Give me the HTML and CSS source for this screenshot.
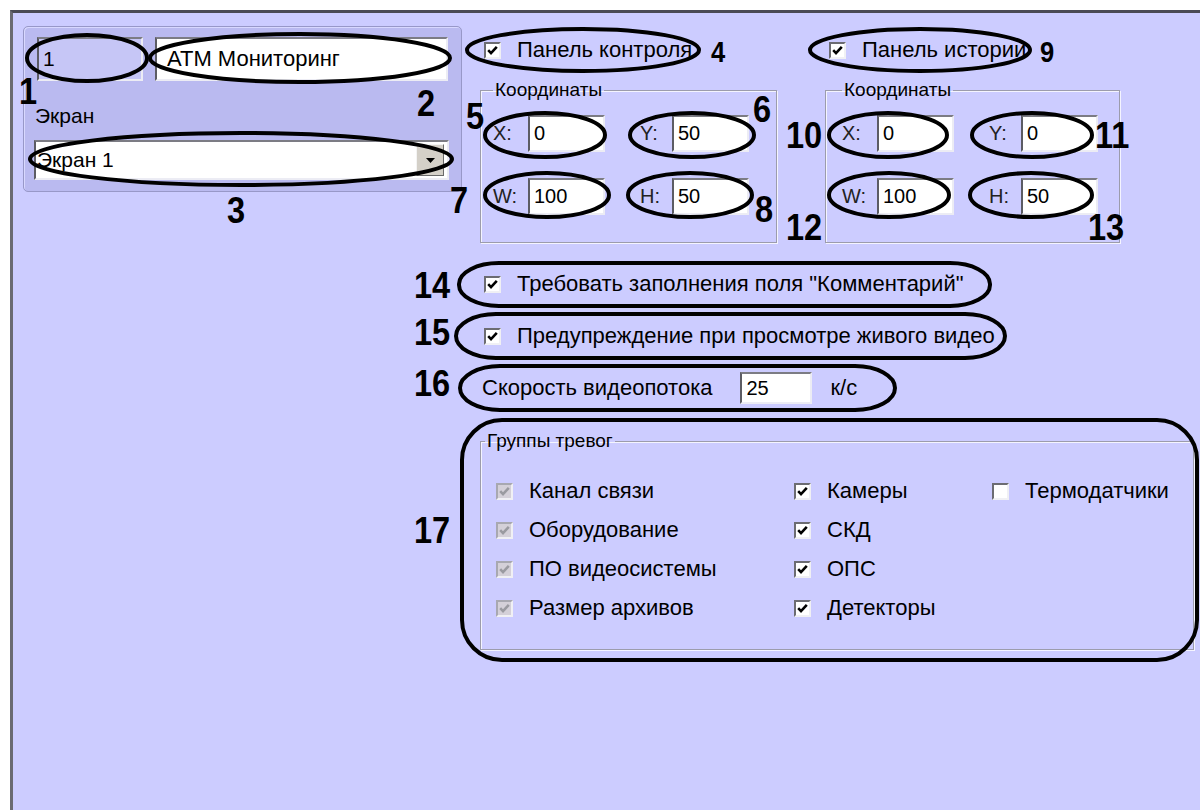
FILE: index.html
```html
<!DOCTYPE html>
<html lang="ru">
<head>
    <meta charset="UTF-8">
    <title>Настройка АТМ Мониторинг</title>
    <link rel="stylesheet" href="styles.css">
</head>
<body>

<div class="window">
    <div class="layout">
        <!-- left: screen settings -->
        <div class="left-col">
            <div class="screen-panel">
                <div class="id-row">
                    <span class="field field-id">1</span>
                    <span class="field field-name">АТМ Мониторинг</span>
                </div>
                <div class="screen-label">Экран</div>
                <div class="combo">
                    <span class="combo-text">Экран 1</span>
                    <span class="combo-btn">
                        <svg width="9" height="5" viewBox="0 0 9 5"><path d="M0 0h9L4.5 5z" fill="#000"/></svg>
                    </span>
                </div>
            </div>
        </div>

        <!-- right: panels and options -->
        <div class="right-col">
            <div class="panels">
                <div class="panel">
                    <div class="check panel-check">
                        <span class="box"><svg viewBox="0 0 13 13"><path d="M2.2 6.2l2.8 2.9 5.8-6.2"/></svg></span>
                        Панель контроля
                    </div>
                    <fieldset class="group coords">
                        <legend>Координаты</legend>
                        <div class="coord-row">
                            <span class="coord-label">X:</span><span class="field coord-input">0</span>
                            <span class="coord-label second">Y:</span><span class="field coord-input">50</span>
                        </div>
                        <div class="coord-row">
                            <span class="coord-label">W:</span><span class="field coord-input">100</span>
                            <span class="coord-label second">H:</span><span class="field coord-input">50</span>
                        </div>
                    </fieldset>
                </div>
                <div class="panel">
                    <div class="check panel-check">
                        <span class="box"><svg viewBox="0 0 13 13"><path d="M2.2 6.2l2.8 2.9 5.8-6.2"/></svg></span>
                        Панель истории
                    </div>
                    <fieldset class="group coords coords-history">
                        <legend>Координаты</legend>
                        <div class="coord-row">
                            <span class="coord-label">X:</span><span class="field coord-input">0</span>
                            <span class="coord-label second">Y:</span><span class="field coord-input">0</span>
                        </div>
                        <div class="coord-row">
                            <span class="coord-label">W:</span><span class="field coord-input">100</span>
                            <span class="coord-label second">H:</span><span class="field coord-input">50</span>
                        </div>
                    </fieldset>
                </div>
            </div>

            <div class="check option-row">
                <span class="box"><svg viewBox="0 0 13 13"><path d="M2.2 6.2l2.8 2.9 5.8-6.2"/></svg></span>
                Требовать заполнения поля "Комментарий"
            </div>
            <div class="check option-row">
                <span class="box"><svg viewBox="0 0 13 13"><path d="M2.2 6.2l2.8 2.9 5.8-6.2"/></svg></span>
                Предупреждение при просмотре живого видео
            </div>
            <div class="speed-row">
                <span>Скорость видеопотока</span>
                <span class="field speed-input">25</span>
                <span class="speed-unit">к/с</span>
            </div>

            <fieldset class="group alarms">
                <legend>Группы тревог</legend>
                <div class="alarm-grid">
                    <div class="check"><span class="box disabled"><svg viewBox="0 0 13 13"><path d="M2.2 6.2l2.8 2.9 5.8-6.2"/></svg></span>Канал связи</div>
                    <div class="check"><span class="box"><svg viewBox="0 0 13 13"><path d="M2.2 6.2l2.8 2.9 5.8-6.2"/></svg></span>Камеры</div>
                    <div class="check"><span class="box"></span>Термодатчики</div>

                    <div class="check"><span class="box disabled"><svg viewBox="0 0 13 13"><path d="M2.2 6.2l2.8 2.9 5.8-6.2"/></svg></span>Оборудование</div>
                    <div class="check"><span class="box"><svg viewBox="0 0 13 13"><path d="M2.2 6.2l2.8 2.9 5.8-6.2"/></svg></span>СКД</div>
                    <div></div>

                    <div class="check"><span class="box disabled"><svg viewBox="0 0 13 13"><path d="M2.2 6.2l2.8 2.9 5.8-6.2"/></svg></span>ПО видеосистемы</div>
                    <div class="check"><span class="box"><svg viewBox="0 0 13 13"><path d="M2.2 6.2l2.8 2.9 5.8-6.2"/></svg></span>ОПС</div>
                    <div></div>

                    <div class="check"><span class="box disabled"><svg viewBox="0 0 13 13"><path d="M2.2 6.2l2.8 2.9 5.8-6.2"/></svg></span>Размер архивов</div>
                    <div class="check"><span class="box"><svg viewBox="0 0 13 13"><path d="M2.2 6.2l2.8 2.9 5.8-6.2"/></svg></span>Детекторы</div>
                    <div></div>
                </div>
            </fieldset>
        </div>
    </div>
</div>

<!-- numbered callouts drawn over the dialog -->
<svg class="callouts" width="1200" height="810" viewBox="0 0 1200 810">
    <g class="rings">
        <ellipse cx="87" cy="58" rx="60" ry="23"/>
        <ellipse cx="300" cy="58" rx="150" ry="24"/>
        <ellipse cx="241" cy="159" rx="211" ry="26"/>
        <ellipse cx="583" cy="50" rx="116" ry="21"/>
        <ellipse cx="920" cy="50" rx="110" ry="21"/>
        <ellipse cx="545" cy="135" rx="60" ry="22"/>
        <ellipse cx="692" cy="135" rx="62" ry="22"/>
        <ellipse cx="547" cy="195" rx="62" ry="22"/>
        <ellipse cx="690" cy="195" rx="62" ry="22"/>
        <ellipse cx="888" cy="135" rx="59" ry="22"/>
        <ellipse cx="1032" cy="135" rx="60" ry="22"/>
        <ellipse cx="889" cy="195" rx="60" ry="22"/>
        <ellipse cx="1031" cy="195" rx="61" ry="22"/>
        <rect x="459" y="263" width="531" height="43" rx="40" ry="21"/>
        <rect x="456" y="314" width="549" height="44" rx="40" ry="22"/>
        <rect x="460" y="366" width="435" height="44" rx="40" ry="22"/>
        <rect x="462" y="420" width="735" height="240" rx="40" ry="40"/>
    </g>
    <g class="nums">
        <text x="19" y="104">1</text>
        <text x="417" y="116">2</text>
        <text x="227" y="223">3</text>
        <text x="711" y="62" class="small">4</text>
        <text x="1040" y="62" class="small">9</text>
        <text x="466" y="129">5</text>
        <text x="753" y="122">6</text>
        <text x="450" y="213">7</text>
        <text x="755" y="222">8</text>
        <text x="786" y="148">10</text>
        <text x="1095" y="148">11</text>
        <text x="786" y="240">12</text>
        <text x="1088" y="240">13</text>
        <text x="414" y="298">14</text>
        <text x="414" y="345">15</text>
        <text x="414" y="396">16</text>
        <text x="414" y="543">17</text>
    </g>
</svg>

</body>
</html>
```

FILE: styles.css
```css
body {
    margin: 0;
    padding: 10px 0 0 10px;
    width: 1190px;
    height: 800px;
    overflow: hidden;
    position: relative;
    background-color: #fff;
    font-family: "Liberation Sans", Arial, sans-serif;
    font-size: 22px;
    color: #000;
}
.window {
    height: 800px;
    background-color: #ccccff;
    border-top: 3px solid #4a4a55;
    border-left: 3px solid #6a6a72;
}
.layout {
    display: flex;
    padding: 13px 0 0 10px;
}
.left-col {
    width: 455px;
    flex: none;
}
.screen-panel {
    width: 411px;
    height: 144px;
    padding: 10px 13px 10px 13px;
    background-color: #babaf0;
    border: 1px solid #9898c8;
    border-radius: 5px;
    box-shadow: inset 1px 1px 0 #d8d8ff;
}
.id-row {
    display: flex;
    gap: 12px;
}
.field {
    display: flex;
    align-items: center;
    box-sizing: border-box;
    background-color: #fff;
    border: 2px solid;
    border-color: #7c7c84 #ececf4 #ececf4 #5c5c64;
    padding-left: 4px;
    color: #000;
}
.field-id {
    width: 106px;
    height: 44px;
    background-color: #c6c6f6;
    font-size: 21px;
}
.field-name {
    width: 293px;
    height: 44px;
    font-size: 22px;
    padding-left: 10px;
}
.screen-label {
    margin: 24px 0 0 -2px;
    line-height: 22px;
    font-size: 21px;
}
.combo {
    display: flex;
    align-items: center;
    justify-content: space-between;
    box-sizing: border-box;
    width: 415px;
    height: 40px;
    margin: 13px 0 0 -3px;
    padding: 0 3px 0 1px;
    background-color: #fff;
    border: 2px solid;
    border-color: #7c7c84 #ececf4 #ececf4 #5c5c64;
    font-size: 21px;
}
.combo-btn {
    display: flex;
    align-items: center;
    justify-content: center;
    box-sizing: border-box;
    width: 28px;
    height: 32px;
    background-color: #d4d0c8;
    border: 1px solid;
    border-color: #f4f4f4 #6a6a6a #6a6a6a #f4f4f4;
}
.right-col {
    padding-left: 2px;
}
.panels {
    display: flex;
    gap: 48px;
}
.check {
    display: flex;
    align-items: center;
    height: 24px;
    white-space: nowrap;
}
.box {
    display: inline-flex;
    align-items: center;
    justify-content: center;
    box-sizing: border-box;
    width: 17px;
    height: 17px;
    margin-right: 16px;
    flex: none;
    background-color: #fff;
    border: 2px solid;
    border-color: #6c6c72 #f0f0f4 #f0f0f4 #6c6c72;
}
.box svg {
    width: 13px;
    height: 13px;
}
.box path {
    fill: none;
    stroke: #000;
    stroke-width: 2.6;
}
.box.disabled {
    background-color: #d4d0d8;
    border-color: #a8a8b0 #f0f0f4 #f0f0f4 #a8a8b0;
}
.box.disabled path {
    stroke: #9a9aa0;
}
.panel-check {
    margin-top: 12px;
    padding-left: 4px;
}
.group {
    margin: 0;
    border: 1px solid #9c9cac;
    box-shadow: inset 1px 1px 0 #f4f4ff, 1px 1px 0 #f4f4ff;
}
.group legend {
    font-size: 19px;
    line-height: 20px;
    padding: 0 2px;
}
.coords {
    width: 297px;
    box-sizing: border-box;
    margin-top: 18px;
    padding: 15px 0 27px 12px;
}
.coords-history {
    width: 295px;
    padding-left: 16px;
}
.coord-row {
    display: flex;
    align-items: center;
}
.coord-row + .coord-row {
    margin-top: 26px;
}
.coord-label {
    width: 35px;
    font-size: 20px;
    color: #222;
}
.coord-label.second {
    width: 32px;
    margin-left: 35px;
}
.coord-input {
    width: 77px;
    height: 37px;
    font-size: 20px;
}
.option-row {
    padding-left: 4px;
    margin-top: 29px;
}
.option-row + .option-row {
    margin-top: 28px;
}
.speed-row {
    display: flex;
    align-items: center;
    height: 32px;
    margin-top: 24px;
    padding-left: 2px;
}
.speed-input {
    width: 72px;
    height: 32px;
    margin-left: 28px;
    font-size: 20px;
}
.speed-unit {
    margin-left: 18px;
}
.alarms {
    width: 714px;
    box-sizing: border-box;
    margin-top: 27px;
    padding: 28px 0 29px 15px;
}
.alarms legend {
    margin-left: -11px;
}
.alarm-grid {
    display: grid;
    grid-template-columns: 298px 198px 200px;
    row-gap: 15px;
}
.callouts {
    position: absolute;
    top: 0;
    left: 0;
    pointer-events: none;
}
.rings ellipse,
.rings rect {
    fill: none;
    stroke: #000;
    stroke-width: 4;
}
.nums text {
    font-family: "Liberation Sans", Arial, sans-serif;
    font-weight: bold;
    font-size: 37px;
    fill: #000;
    transform-box: fill-box;
    transform-origin: left bottom;
    transform: scaleX(0.88);
}
.nums text.small {
    font-size: 29px;
}
```
